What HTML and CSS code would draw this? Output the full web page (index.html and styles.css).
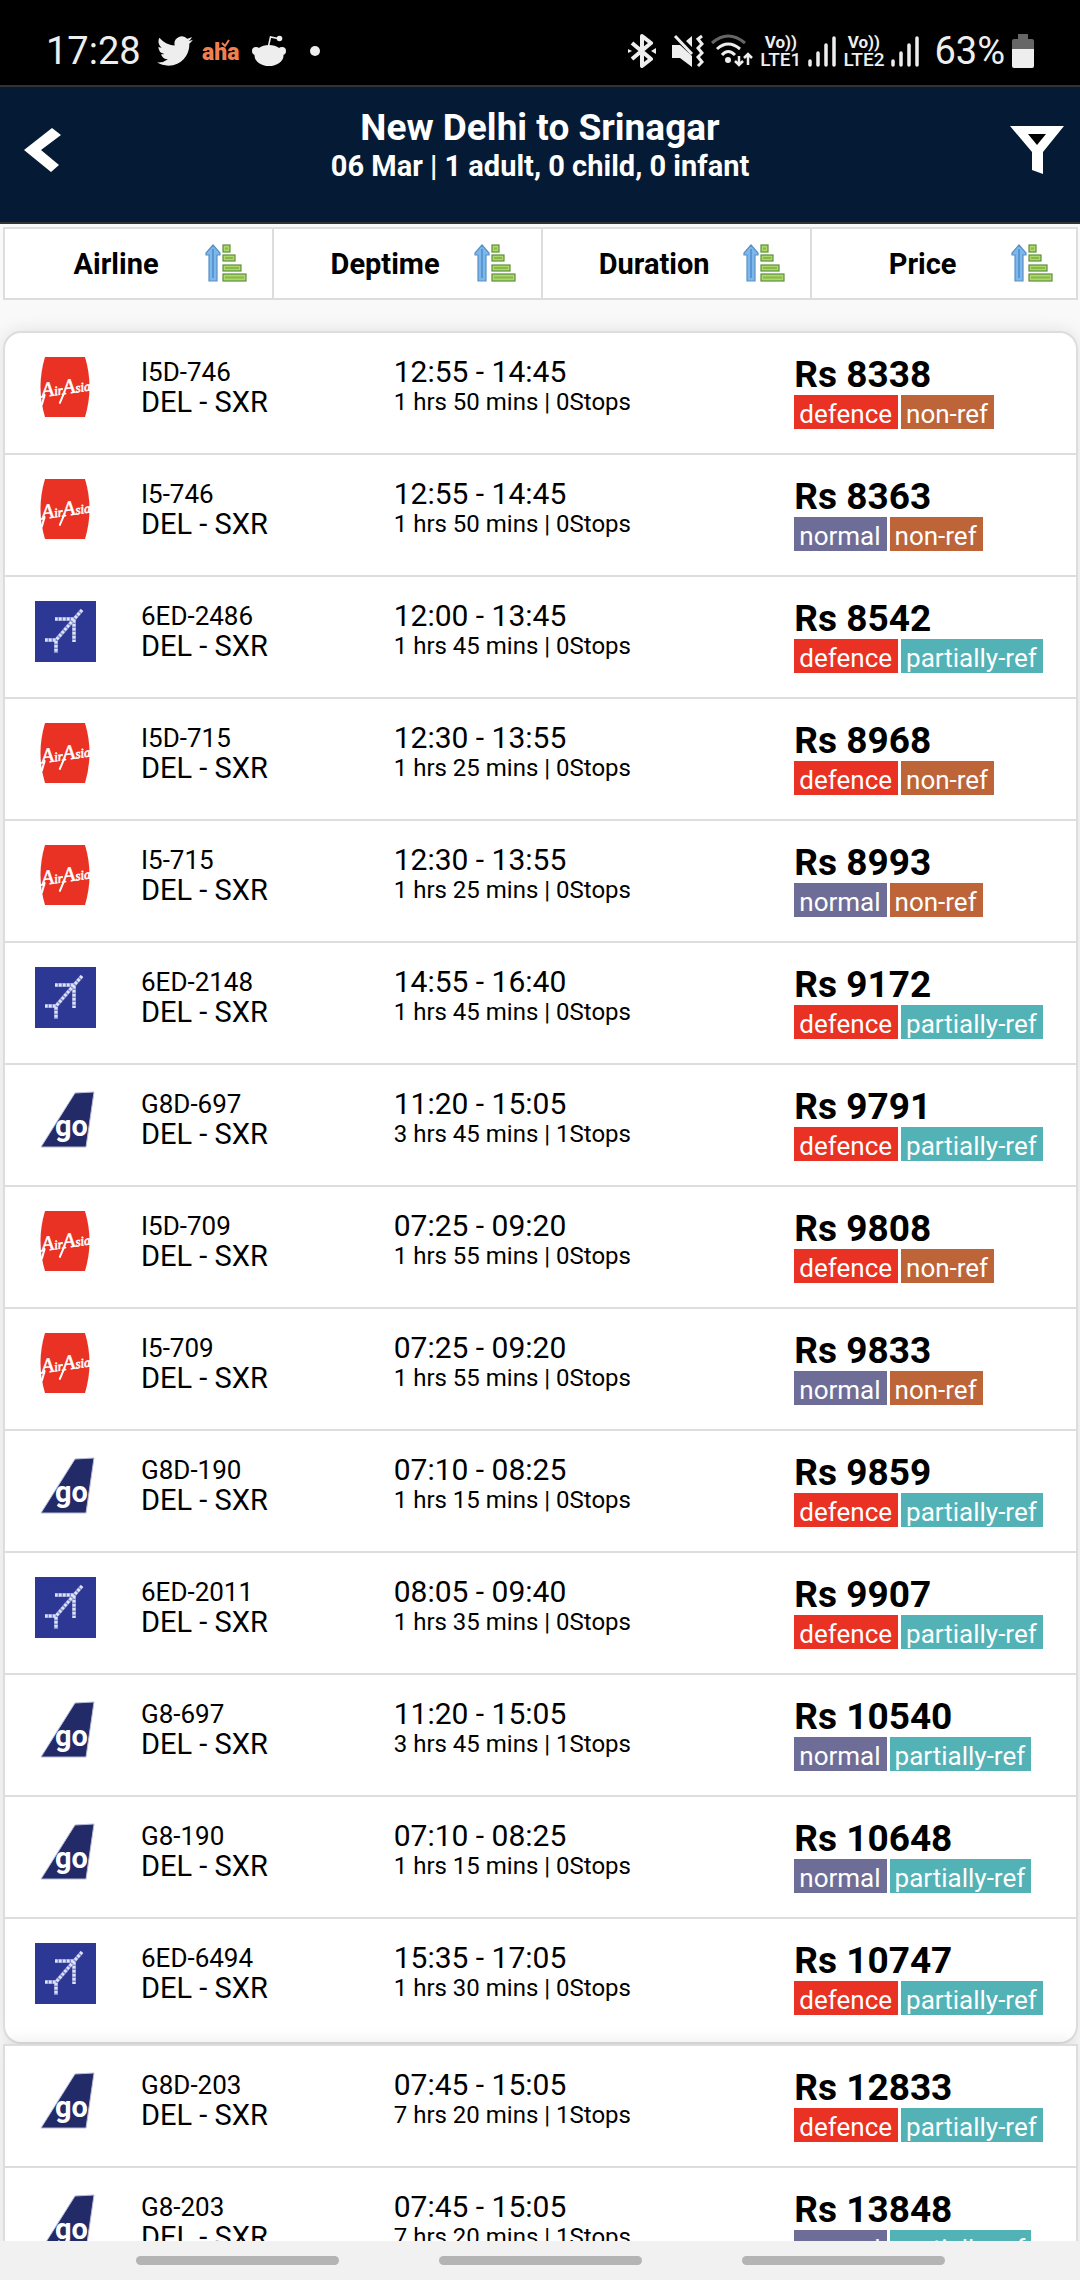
FILE: index.html
```html
<!DOCTYPE html>
<html lang="en">
<head>
    <meta charset="utf-8">
    <meta name="viewport" content="width=device-width">
    <title>New Delhi to Srinagar</title>
    <link rel="stylesheet" href="styles.css">
</head>
<body>
    <svg class="defs" aria-hidden="true">
        <symbol id="sort" viewBox="0 0 43 40">
            <path d="M8 1 L15 9 V11 H12 V37 H4 V11 H1 V9 Z" fill="#7db8ea" stroke="#5a8fc5" stroke-width="1.200"/>
            <path d="M8 5 V34" stroke="#4c8ccb" stroke-width="1.500"/>
            <g fill="#b0d76a" stroke="#5d8f3c" stroke-width="1.200">
                <rect x="18" y="1" width="7" height="7"/>
                <rect x="18" y="11" width="12" height="6"/>
                <rect x="18" y="21" width="18" height="6"/>
                <rect x="18" y="30" width="23" height="7"/>
            </g>
            <path d="M20 4.500h3M20 14h8M20 24h14M20 33.500h19" stroke="#86b94a" stroke-width="2"/>
        </symbol>
        <symbol id="signal" viewBox="0 0 28 32">
            <path d="M2 26V30M10 18V30M18 10V30M26 3V30" stroke="#eee" stroke-width="3.500" stroke-linecap="round"/>
        </symbol>
    </svg>

    <div class="status-bar">
        <span class="clock">17:28</span>
        <svg class="twitter" width="36" height="30" viewBox="0 0 24 20" fill="#eee">
            <path d="M23.950 2.570a10 10 0 0 1-2.820.770 4.960 4.960 0 0 0 2.160-2.720 10 10 0 0 1-3.120 1.180 4.920 4.920 0 0 0-8.380 4.480C7.690 6.090 4.070 4.130 1.640 1.160a4.820 4.820 0 0 0-.670 2.480c0 1.710.870 3.210 2.190 4.100a4.900 4.900 0 0 1-2.230-.620v.060a4.920 4.920 0 0 0 3.950 4.830 5 5 0 0 1-2.210.080 4.940 4.940 0 0 0 4.600 3.420A9.870 9.870 0 0 1 0 17.540a14 14 0 0 0 7.550 2.210c9.050 0 14-7.500 14-13.980l-.020-.640a9.900 9.900 0 0 0 2.420-2.560z"/>
        </svg>
        <svg class="aha" width="42" height="30" viewBox="0 0 42 30">
            <text x="0" y="24">aha</text>
            <path d="M20 7 L23 10 L27 4" fill="none" stroke="#f08050" stroke-width="2"/>
        </svg>
        <svg class="reddit" width="34" height="32" viewBox="0 0 34 32" fill="#eee">
            <ellipse cx="17" cy="20.500" rx="14.500" ry="10.500"/>
            <circle cx="4" cy="16" r="4"/>
            <circle cx="30" cy="16" r="4"/>
            <circle cx="27.500" cy="3.500" r="2.800"/>
            <path d="M16.500 11 L18.500 2 L26 3.500" fill="none" stroke="#eee" stroke-width="1.500"/>
        </svg>
        <span class="dot"></span>
        <div class="status-right">
            <svg width="30" height="34" viewBox="0 0 30 34">
                <path d="M5 9 L24 25 L15 32 V2 L24 9 L5 25" fill="none" stroke="#eee" stroke-width="4" stroke-linejoin="round"/>
                <path d="M1 15l4 2-4 2zM29 14l-5 3 5 3z" fill="#eee"/>
            </svg>
            <svg width="32" height="34" viewBox="0 0 32 34">
                <path d="M0 11H8L20 22V33L8 24H0ZM20 2V13L14 7Z" fill="#eee"/>
                <path d="M3 2 L20 20" stroke="#eee" stroke-width="3"/>
                <path d="M30 2L26 5L30 10L26 14L30 19L26 23L30 28L26 32" fill="none" stroke="#eee" stroke-width="3"/>
            </svg>
            <svg width="42" height="34" viewBox="0 0 42 34" fill="none" stroke="#eee" stroke-width="3">
                <path d="M1 9Q17 -5 34 9" stroke="#666"/>
                <path d="M6 15Q17 5 29 15M11 21Q17 14 24 21"/>
                <circle cx="17" cy="26" r="1.500"/>
                <path d="M28 22V31M24 27L28 31L32 27M37 31V20M33 24L37 20L41 24" stroke-width="2.500"/>
            </svg>
            <span class="lte"><b>Vo))</b>LTE1</span>
            <svg width="28" height="32"><use href="#signal"/></svg>
            <span class="lte"><b>Vo))</b>LTE2</span>
            <svg width="28" height="32"><use href="#signal"/></svg>
            <span class="percent">63%</span>
            <svg width="22" height="34" viewBox="0 0 22 34">
                <path d="M6 0H16V5H20Q22 5 22 7V16H0V7Q0 5 2 5H6Z" fill="#666"/>
                <path d="M0 15H22V32Q22 34 20 34H2Q0 34 0 32Z" fill="#eee"/>
            </svg>
        </div>
    </div>

    <header class="header">
        <button class="icon-btn" aria-label="Back">
            <svg width="38" height="46" viewBox="0 0 38 46">
                <path d="M28 1 L37 8 L17 23 L35 38 L27 45 L0 23 Z" fill="#fff"/>
            </svg>
        </button>
        <div class="header-text">
            <h1>New Delhi to Srinagar</h1>
            <p>06 Mar | 1 adult, 0 child, 0 infant</p>
        </div>
        <button class="icon-btn" aria-label="Filter">
            <svg width="54" height="50" viewBox="0 0 54 50">
                <path d="M0 1 H54 L33 27 V49 L22 45 V27 Z" fill="#fff"/>
                <path d="M18 9 H36 L27 20 Z" fill="#000"/>
            </svg>
        </button>
    </header>

    <nav class="sort-bar">
        <button><span>Airline</span><svg width="43" height="40"><use href="#sort"/></svg></button>
        <button><span>Deptime</span><svg width="43" height="40"><use href="#sort"/></svg></button>
        <button><span>Duration</span><svg width="43" height="40"><use href="#sort"/></svg></button>
        <button><span>Price</span><svg width="43" height="40"><use href="#sort"/></svg></button>
    </nav>

    <main class="results">
        <ul class="flights rounded" id="flights"></ul>
        <ul class="flights" id="moreFlights"></ul>
    </main>

    <div class="nav-bar">
        <span></span>
        <span></span>
        <span></span>
    </div>

    <script src="script.js"></script>
</body>
</html>
```
FILE: styles.css
```css
* {
    box-sizing: border-box;
}
body {
    margin: 0;
    height: 100vh;
    display: flex;
    flex-direction: column;
    font-family: Roboto, sans-serif;
    background: #f9f9f9;
    color: #000;
    overflow: hidden;
}
h1, p, ul {
    margin: 0;
    padding: 0;
}
ul {
    list-style: none;
}
button {
    font-family: inherit;
    padding: 0;
    border: none;
    background: none;
    cursor: pointer;
}
svg {
    display: block;
    flex: none;
}
.defs {
    position: absolute;
    width: 0;
    height: 0;
}

/* phone status bar */
.status-bar {
    flex: none;
    display: flex;
    align-items: center;
    height: 85px;
    padding: 16px 46px 0;
    background: #000;
    color: #eee;
}
.clock, .percent {
    font-size: 38px;
    line-height: 44px;
}
.twitter {
    margin-left: 16px;
}
.aha {
    margin: 0 8px 0 9px;
    fill: #f08050;
    font-size: 23px;
    font-weight: 900;
}
.dot {
    width: 10px;
    height: 10px;
    margin-left: 24px;
    border-radius: 50%;
    background: #eee;
}
.status-right {
    margin-left: auto;
    display: flex;
    align-items: center;
    gap: 7px;
}
.status-right svg:first-child {
    margin-right: 8px;
}
.percent {
    margin-left: 8px;
}
.lte {
    display: flex;
    flex-direction: column;
    align-items: center;
    font-size: 19px;
    font-weight: 500;
    line-height: 17px;
}
.lte b {
    font-size: 17px;
}

.header {
    flex: none;
    display: flex;
    align-items: center;
    justify-content: space-between;
    height: 139px;
    padding: 0 16px 10px;
    background: #051b35;
    border-top: 2px solid #333;
    border-bottom: 2px solid #333;
    color: #fff;
}
.icon-btn {
    display: flex;
    justify-content: center;
    width: 54px;
}
.header-text {
    margin-bottom: 8px;
    text-align: center;
}
.header h1 {
    font-size: 37px;
    line-height: 40px;
}
.header p {
    font-size: 29px;
    font-weight: bold;
    line-height: 36px;
}

.sort-bar {
    flex: none;
    display: grid;
    grid-template-columns: 51fr 51fr 51fr 50fr;
    margin: 3px 2px 31px 3px;
    border: 2px solid #ddd;
    background: #fff;
}
.sort-bar button {
    display: flex;
    align-items: center;
    height: 69px;
    padding: 0 24px 0 22px;
    border-right: 2px solid #ddd;
    font-size: 29px;
    font-weight: bold;
    color: #000;
}
.sort-bar button:last-child {
    padding-right: 22px;
    border-right: none;
}
.sort-bar span {
    flex: 1;
}

.results {
    flex: 1;
    min-height: 0;
}
.flights {
    margin: 0 2px 0 3px;
    border: 2px solid #ddd;
    background: #fff;
    box-shadow: 0 0 18px rgba(0, 0, 0, 0.1);
}
.flights.rounded {
    padding-bottom: 1px;
    border-radius: 18px;
}
.flight {
    display: grid;
    grid-template-columns: 106px 253fr 401fr 282fr;
    min-height: 122px;
    padding: 24px 0 0 30px;
    border-bottom: 2px solid #ddd;
}
.flight:last-child {
    border-bottom: none;
}
.code, .route, .times, .details {
    line-height: 30px;
}
.code {
    font-size: 26px;
}
.route {
    font-size: 29px;
}
.times {
    font-size: 30px;
}
.details {
    font-size: 24px;
}
.price {
    margin-bottom: 2px;
    font-size: 37px;
    font-weight: bold;
    line-height: 36px;
}
.tags {
    display: flex;
    gap: 3px;
}
.tag {
    padding: 4px 6px 0 5px;
    font-size: 26px;
    line-height: 30px;
    color: #fff;
}
.tag.defence {
    background: #e93223;
}
.tag.normal {
    background: #6d6d97;
}
.tag.non-ref {
    background: #bd6439;
}
.tag.partially-ref {
    background: #52b2b5;
}

.airasia-text {
    fill: #fff;
    stroke: #fff;
    stroke-width: 0.6;
    font: italic 13px "Liberation Serif", serif;
}
.airasia-text .cap {
    font-size: 21px;
}
.go-text {
    fill: #fff;
    font: bold 29px Roboto, sans-serif;
}

.nav-bar {
    flex: none;
    position: relative;
    display: flex;
    justify-content: center;
    align-items: center;
    gap: 100px;
    height: 39px;
    background: #f1f1f1;
}
.nav-bar span {
    width: 203px;
    height: 9px;
    border-radius: 5px;
    background: #b4b4b4;
}
```
FILE: script.js
```js
const logos = {
    airasia: `
        <path d="M10 0 H50 Q59 30 50 60 H10 Q1 30 10 0 Z" fill="#e93223"/>
        <g class="airasia-text" transform="rotate(-8 30 32)">
            <text x="6" y="37"><tspan class="cap">A</tspan>ir<tspan class="cap">A</tspan>sia</text>
            <path d="M9 35 L5 44 M29 35 L23 45" fill="none" stroke-width="2" stroke-linecap="round"/>
        </g>`,
    indigo: `
        <rect width="61" height="61" fill="#2c3894"/>
        <path d="M47 9 L21 39 M20 18 H39 V41 M10 39 H21 V52" fill="none" stroke="#7f88cb" stroke-width="4"/>
        <path d="M47 9 L21 39 M20 18 H39 V41 M10 39 H21 V52" fill="none" stroke="#dfe3f8" stroke-width="3" stroke-dasharray="2.600 1.400"/>`,
    goair: `
        <path d="M40 4 L59 3 L51 58 H6 Z" fill="#222a68" stroke="#b9bcd6" stroke-width="1"/>
        <text x="20" y="47" class="go-text">go</text>`
};

const flights = [
    ['airasia', 'I5D-746', '12:55 - 14:45', '1 hrs 50 mins | 0Stops', 8338, 'defence', 'non-ref'],
    ['airasia', 'I5-746', '12:55 - 14:45', '1 hrs 50 mins | 0Stops', 8363, 'normal', 'non-ref'],
    ['indigo', '6ED-2486', '12:00 - 13:45', '1 hrs 45 mins | 0Stops', 8542, 'defence', 'partially-ref'],
    ['airasia', 'I5D-715', '12:30 - 13:55', '1 hrs 25 mins | 0Stops', 8968, 'defence', 'non-ref'],
    ['airasia', 'I5-715', '12:30 - 13:55', '1 hrs 25 mins | 0Stops', 8993, 'normal', 'non-ref'],
    ['indigo', '6ED-2148', '14:55 - 16:40', '1 hrs 45 mins | 0Stops', 9172, 'defence', 'partially-ref'],
    ['goair', 'G8D-697', '11:20 - 15:05', '3 hrs 45 mins | 1Stops', 9791, 'defence', 'partially-ref'],
    ['airasia', 'I5D-709', '07:25 - 09:20', '1 hrs 55 mins | 0Stops', 9808, 'defence', 'non-ref'],
    ['airasia', 'I5-709', '07:25 - 09:20', '1 hrs 55 mins | 0Stops', 9833, 'normal', 'non-ref'],
    ['goair', 'G8D-190', '07:10 - 08:25', '1 hrs 15 mins | 0Stops', 9859, 'defence', 'partially-ref'],
    ['indigo', '6ED-2011', '08:05 - 09:40', '1 hrs 35 mins | 0Stops', 9907, 'defence', 'partially-ref'],
    ['goair', 'G8-697', '11:20 - 15:05', '3 hrs 45 mins | 1Stops', 10540, 'normal', 'partially-ref'],
    ['goair', 'G8-190', '07:10 - 08:25', '1 hrs 15 mins | 0Stops', 10648, 'normal', 'partially-ref'],
    ['indigo', '6ED-6494', '15:35 - 17:05', '1 hrs 30 mins | 0Stops', 10747, 'defence', 'partially-ref']
];

const moreFlights = [
    ['goair', 'G8D-203', '07:45 - 15:05', '7 hrs 20 mins | 1Stops', 12833, 'defence', 'partially-ref'],
    ['goair', 'G8-203', '07:45 - 15:05', '7 hrs 20 mins | 1Stops', 13848, 'normal', 'partially-ref']
];

function renderFlights(id, list) {
    document.getElementById(id).innerHTML = list.map(([logo, code, times, details, price, fare, refund]) => `
        <li class="flight">
            <svg width="61" height="61" viewBox="0 0 61 61">${logos[logo]}</svg>
            <div>
                <div class="code">${code}</div>
                <div class="route">DEL - SXR</div>
            </div>
            <div>
                <div class="times">${times}</div>
                <div class="details">${details}</div>
            </div>
            <div>
                <div class="price">Rs ${price}</div>
                <div class="tags">
                    <span class="tag ${fare}">${fare}</span>
                    <span class="tag ${refund}">${refund}</span>
                </div>
            </div>
        </li>`).join('');
}

renderFlights('flights', flights);
renderFlights('moreFlights', moreFlights);
```
